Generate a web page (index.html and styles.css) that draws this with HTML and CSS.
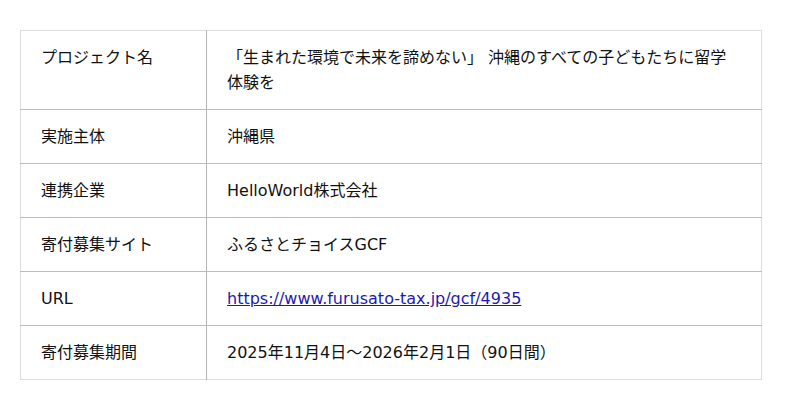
FILE: index.html
```html
<!DOCTYPE html>
<html lang="ja">
<head>
<meta charset="utf-8">
<title>概要</title>
<link rel="stylesheet" href="styles.css">
</head>
<body>
<table class="info">
  <tr><th>プロジェクト名</th><td>「生まれた環境で未来を諦めない」 沖縄のすべての子どもたちに留学体験を</td></tr>
  <tr><th>実施主体</th><td>沖縄県</td></tr>
  <tr><th>連携企業</th><td>HelloWorld株式会社</td></tr>
  <tr><th>寄付募集サイト</th><td>ふるさとチョイスGCF</td></tr>
  <tr><th>URL</th><td><a href="#">https://www.furusato-tax.jp/gcf/4935</a></td></tr>
  <tr><th>寄付募集期間</th><td>2025年11月4日～2026年2月1日（90日間）</td></tr>
</table>
</body>
</html>
```

FILE: styles.css
```css
html, body {
  margin: 0;
  padding: 0;
  background: #fff;
}
body {
  padding: 30px 20px;
  font-family: "DejaVu Sans", "Noto Sans CJK JP", sans-serif;
  font-size: 16px;
  color: #111;
}
.info {
  width: 742px;
  border-collapse: collapse;
  border: 1px solid #dddddd;
}
.info th,
.info td {
  text-align: left;
  font-weight: normal;
  vertical-align: top;
  padding: 14px 20px;
  line-height: 25px;
  border-top: 1px solid #bdbdbd;
}
.info tr:first-child th,
.info tr:first-child td {
  border-top: 1px solid #dddddd;
}
.info th {
  width: 145px;
  border-right: 1px solid #b5b5b5;
}
.info a {
  color: #1a0dab;
  color: #1d1ab0;
}
```
